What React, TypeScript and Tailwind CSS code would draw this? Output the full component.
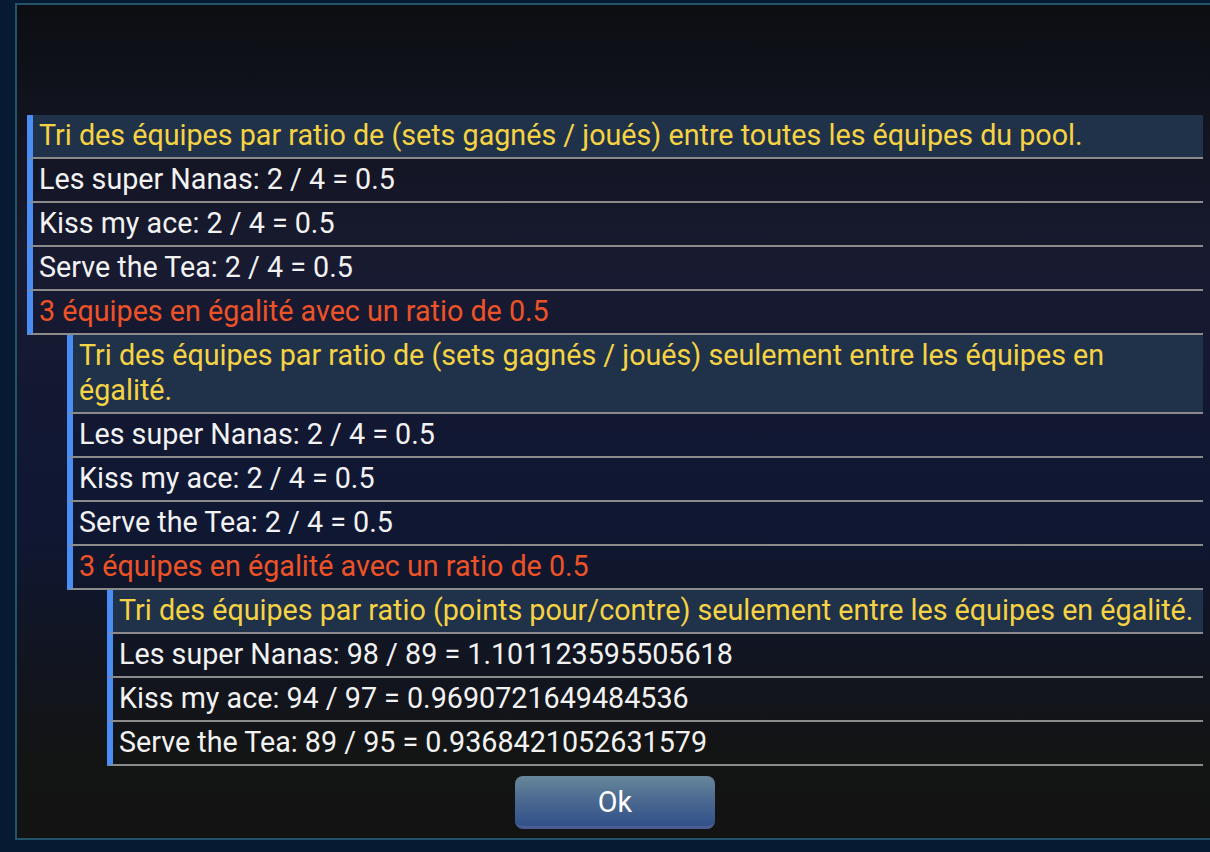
type Row = { text: string; kind: 'head' | 'item' | 'tie' };

const levels: Row[][] = [
  [
    { text: 'Tri des équipes par ratio de (sets gagnés / joués) entre toutes les équipes du pool.', kind: 'head' },
    { text: 'Les super Nanas: 2 / 4 = 0.5', kind: 'item' },
    { text: 'Kiss my ace: 2 / 4 = 0.5', kind: 'item' },
    { text: 'Serve the Tea: 2 / 4 = 0.5', kind: 'item' },
    { text: '3 équipes en égalité avec un ratio de 0.5', kind: 'tie' },
  ],
  [
    { text: 'Tri des équipes par ratio de (sets gagnés / joués) seulement entre les équipes en égalité.', kind: 'head' },
    { text: 'Les super Nanas: 2 / 4 = 0.5', kind: 'item' },
    { text: 'Kiss my ace: 2 / 4 = 0.5', kind: 'item' },
    { text: 'Serve the Tea: 2 / 4 = 0.5', kind: 'item' },
    { text: '3 équipes en égalité avec un ratio de 0.5', kind: 'tie' },
  ],
  [
    { text: 'Tri des équipes par ratio (points pour/contre) seulement entre les équipes en égalité.', kind: 'head' },
    { text: 'Les super Nanas: 98 / 89 = 1.101123595505618', kind: 'item' },
    { text: 'Kiss my ace: 94 / 97 = 0.9690721649484536', kind: 'item' },
    { text: 'Serve the Tea: 89 / 95 = 0.9368421052631579', kind: 'item' },
  ],
];

const indent = ['ml-0', 'ml-10', 'ml-20'];

function RankRow({ row }: { row: Row }) {
  const color =
    row.kind === 'head' ? 'text-[#f6d344] bg-[#1f3249]' : row.kind === 'tie' ? 'text-[#ee5328]' : 'text-[#f2f2f2]';
  return (
    <div
      className={`border-l-[6px] border-l-[#4a8df5] border-b-2 border-b-[#8b8b8b] pl-[6px] pr-[2px] pt-[3px] pb-[4px] leading-[35px] ${color}`}
    >
      {row.text}
    </div>
  );
}

export default function App() {
  return (
    <div className="h-[852px] w-[1210px] overflow-hidden bg-[#061a31] pt-[3px] pl-[15px] font-['Roboto','Liberation_Sans',sans-serif] text-[28.7px]">
      <div className="flex h-[837px] w-[1200px] flex-col border-2 border-[#24526b] bg-[linear-gradient(180deg,#0c0e12_0%,#181a30_30%,#0f1733_62%,#131414_90%,#131313_100%)] px-[10px] pt-[110px] pb-[10px]">
        {/* sorting steps */}
        <div className="flex flex-col">
          {levels.map((rows, i) => (
            <div key={i} className={indent[i]}>
              {rows.map((row, j) => (
                <RankRow key={j} row={row} />
              ))}
            </div>
          ))}
        </div>

        <div className="mt-[10px] flex justify-center">
          <button className="h-[53px] w-[200px] rounded-[8px] border-b-[3px] border-b-[#4b5c93] bg-[linear-gradient(180deg,#67879a_0%,#4a6890_50%,#32518a_100%)] pt-[3px] text-[28.7px] text-white">
            Ok
          </button>
        </div>
      </div>
    </div>
  );
}
